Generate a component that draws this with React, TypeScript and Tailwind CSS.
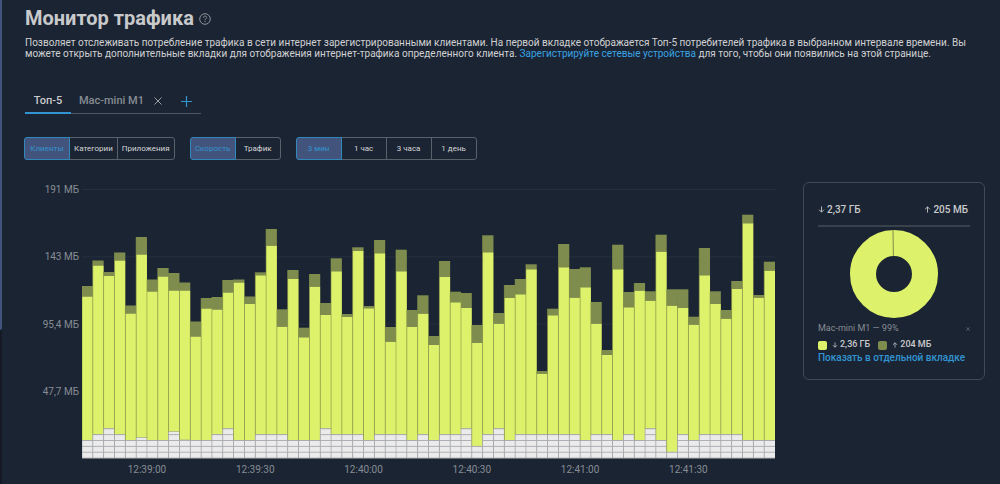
import React, { useState } from "react";

// Each sample: [top of total, top of download, number of overlay cells], in chart units.
type Sample = [number, number, number];

const CHART_TOP = 189;
const BASE = 458;
const BAR = 694 / 64;

const SAMPLES: Sample[] = [
  [286, 296.5, 3], [260.5, 265.5, 4], [272, 276, 5], [252.5, 260.5, 4],
  [305.5, 313.5, 3], [237, 254.5, 3.5], [279.5, 291.5, 3], [268, 276.5, 3],
  [273, 290.5, 4.5], [282.5, 290.5, 3.1], [321.5, 336.5, 3], [298, 308.5, 3],
  [297, 309.5, 4], [280, 292.5, 5], [279.5, 282.5, 3], [296.5, 304, 3],
  [272.3, 275.3, 4], [229, 245.7, 4], [309.3, 326.7, 4], [270, 279, 3],
  [327.7, 337.3, 3], [274, 286.7, 3], [303, 315, 5], [258.3, 271.3, 4],
  [314, 317, 4], [247.3, 251, 4], [306, 308.3, 3], [240, 253.3, 4],
  [327, 341.7, 4], [249.7, 271.3, 4], [310, 327, 3], [295.3, 313.7, 4],
  [336, 345, 3], [261, 277, 4], [291.7, 302.3, 4], [293, 308, 5],
  [325, 343, 2], [235.3, 252.3, 4], [313, 323.7, 5], [285, 298, 3],
  [279, 294.3, 4], [264.3, 269.3, 4], [371, 373.7, 4], [308.7, 315.3, 4],
  [244, 267.3, 4], [269, 297.7, 4], [267.3, 287.3, 3], [302, 323.7, 4],
  [350, 355, 4], [244.7, 269.3, 3], [292, 307.3, 4], [283, 290.7, 3],
  [291.3, 300.7, 5], [234.7, 251.7, 3], [289.3, 305.7, 1], [289.3, 308, 4],
  [316.7, 324.7, 3], [248, 275.3, 4], [291.3, 304, 4], [310, 318.7, 4],
  [281, 289, 4], [214.7, 223.3, 3], [295, 297.7, 3], [261.7, 270.7, 3],
];

const Y_LABELS = ["191 МБ", "143 МБ", "95,4 МБ", "47,7 МБ"];
const X_LABELS = ["12:39:00", "12:39:30", "12:40:00", "12:40:30", "12:41:00", "12:41:30"];

function Chart() {
  const cell = 5.85;
  return (
    <svg viewBox="0 189 694 270" preserveAspectRatio="none" className="block h-[270px] w-full" role="img" aria-label="Трафик">
      {[0, 1, 2, 3].map((i) => (
        <rect key={i} x="0" y={CHART_TOP + i * 67.3} width="694" height="1" fill="#262f3d" />
      ))}
      {SAMPLES.map(([total, down, cells], i) => {
        const x = i * BAR;
        const top = BASE - cells * cell;
        const whole = Math.floor(cells);
        return (
          <g key={i}>
            <rect x={x} y={total} width={BAR} height={down - total} fill="#7e8c4e" />
            <rect x={x} y={down} width={BAR} height={top - down} fill="#def16a" />
            <rect x={x} y={top} width={BAR} height={BASE - top} fill="#ebebeb" />
            {Array.from({ length: whole }, (_, n) => (
              <rect key={n} x={x} y={BASE - (n + 1) * cell - 0.4} width={BAR} height="0.9" fill="#a9aaaf" />
            ))}
            <rect x={x - 0.4} y={total} width="0.8" height={top - total} fill="#8b9a4b" fillOpacity="0.75" />
            <rect x={x - 0.4} y={top} width="0.8" height={BASE - top} fill="#a3a4a9" fillOpacity="0.8" />
          </g>
        );
      })}
      <rect x="0" y="457.7" width="694" height="1" fill="#8f9298" />
    </svg>
  );
}

function Segmented({ items, label, wide }: { items: string[]; label: string; wide?: boolean }) {
  const [active, setActive] = useState(0);
  return (
    <div role="group" aria-label={label} className="flex h-[23px]">
      {items.map((item, i) => (
        <button
          key={item}
          type="button"
          aria-pressed={i === active}
          onClick={() => setActive(i)}
          className={
            "relative -ml-px border text-[8px] first:ml-0 first:rounded-l-[3px] last:rounded-r-[3px] " +
            (wide ? "w-[46px] " : "min-w-[46px] px-1 ") +
            (i === active ? "z-10 border-[#3188bd] bg-[#42547c] text-[#3295d2]" : "border-[#59616b] text-[#d5d6d7]")
          }
        >
          {item}
        </button>
      ))}
    </div>
  );
}

function Arrow({ up, className }: { up?: boolean; className: string }) {
  return (
    <svg viewBox="0 0 8 8" className={className} fill="none" stroke="currentColor" strokeWidth="1" aria-hidden="true">
      {up ? <path d="M4 7.5V1M1.2 3.8L4 1l2.8 2.8" /> : <path d="M4 .5V7M1.2 4.2L4 7l2.8-2.8" />}
    </svg>
  );
}

function Cross({ className }: { className: string }) {
  return (
    <svg viewBox="0 0 8 8" className={className} fill="none" stroke="currentColor" strokeWidth="1" aria-hidden="true">
      <path d="M.5.5l7 7M7.5.5l-7 7" />
    </svg>
  );
}

function Summary() {
  return (
    <aside className="h-[198px] w-[182px] shrink-0 rounded-md border border-[#414956] px-3.5 pt-[15px]">
      <div className="flex h-[29px] items-center justify-between border-b-2 border-[#39414d] pr-0.5 pb-1 text-[10px] font-medium text-[#c9cacb]">
        <span className="flex items-center gap-0.5"><Arrow className="size-[7px]" />2,37 ГБ</span>
        <span className="flex items-center gap-0.5"><Arrow up className="size-[7px]" />205 МБ</span>
      </div>
      <svg viewBox="0 0 88 88" className="mx-auto mt-[3px] block size-[88px]" role="img" aria-label="Mac-mini M1 — 99%">
        <circle cx="44" cy="44" r="31" fill="none" stroke="#def16a" strokeWidth="26" />
        <path d="M43.4 26L43 0" stroke="#7e8c4e" strokeWidth="1" />
      </svg>
      <div className="mt-[5px] flex h-3 items-center justify-between text-[9px] text-[#868d93]">
        <span>Mac-mini M1 — 99%</span>
        <button type="button" aria-label="Закрыть"><Cross className="size-1" /></button>
      </div>
      <div className="mt-1 flex h-3 items-center text-[9px] font-medium text-[#c9cacb]">
        <span className="mr-[5px] size-[9px] rounded-[2px] bg-[#def16a]" />
        <Arrow className="mr-0.5 size-[6px]" />2,36 ГБ
        <span className="mr-[5px] ml-2 size-[9px] rounded-[2px] bg-[#7e8c4e]" />
        <Arrow up className="mr-0.5 size-[6px]" />204 МБ
      </div>
      <a href="#client" className="block text-[10px] leading-[14px] font-medium whitespace-nowrap text-[#3295d2]">Показать в отдельной вкладке</a>
    </aside>
  );
}

export default function App() {
  return (
    <div className="flex min-h-screen bg-[#1b2433] font-['Roboto','Liberation_Sans',sans-serif]">
      <div className="w-0.5 shrink-0 bg-[#151926]">
        <div className="h-[330px] rounded-br-sm bg-[#42547c]" />
      </div>
      <main className="min-w-0 flex-1 pt-1.5 pr-[15px] pl-[23px]">
        <h1 className="flex h-6 items-center gap-[5px] text-[20px] font-bold text-[#c9cacb]">
          Монитор трафика
          <svg viewBox="0 0 12 12" className="mt-0.5 size-3" fill="none" stroke="#8d9399" strokeWidth="1" aria-hidden="true">
            <circle cx="6" cy="6" r="5.3" />
            <path d="M4.3 4.8C4.3 3.7 5 3.1 6 3.1s1.7.6 1.7 1.5C7.7 5.7 6 5.8 6 7.1M6 8v1.1" />
          </svg>
        </h1>
        <p className="mt-[7px] max-w-[944px] text-[10px] leading-[11px] text-[#d0d1d2]">
          Позволяет отслеживать потребление трафика в сети интернет зарегистрированными клиентами. На первой вкладке отображается Топ-5 потребителей трафика в выбранном интервале времени. Вы можете открыть дополнительные вкладки для отображения интернет-трафика определенного клиента.{" "}
          <a href="#devices" className="text-[#3aa2e2]">Зарегистрируйте сетевые устройства</a> для того, чтобы они появились на этой странице.
        </p>

        <div role="tablist" className="mt-7 flex h-[27px] w-44 border-b border-[#4d5560] text-[11px]">
          <button role="tab" aria-selected="true" type="button" className="-mb-px w-[46px] border-b-2 border-[#3295d2] pt-[3px] font-medium text-[#c9cacb]">Топ-5</button>
          <button role="tab" aria-selected="false" type="button" className="ml-2 pt-0.5 font-medium whitespace-nowrap text-[#868d93]">Mac-mini M1</button>
          <button type="button" aria-label="Закрыть вкладку" className="ml-2.5 pt-0.5 text-[#9a9fa4]"><Cross className="size-2" /></button>
          <button type="button" aria-label="Добавить вкладку" className="ml-[19px] pt-0.5 text-[#3295d2]">
            <svg viewBox="0 0 11 11" className="size-[11px]" stroke="currentColor" strokeWidth="1.2" aria-hidden="true"><path d="M5.5 0v11M0 5.5h11" /></svg>
          </button>
        </div>

        <div className="mt-[23px] -ml-px flex gap-[15px]">
          <Segmented label="Группировка" items={["Клиенты", "Категории", "Приложения"]} />
          <Segmented label="Показатель" items={["Скорость", "Трафик"]} wide />
          <Segmented label="Интервал" items={["3 мин", "1 час", "3 часа", "1 день"]} wide />
        </div>

        <div className="mt-[22px] flex items-start">
          <div className="mt-2 grid h-[269px] w-[57px] shrink-0 grid-rows-4 pr-[3px] text-right text-[10px] leading-4 text-[#868d93]">
            {Y_LABELS.map((l) => <span key={l} className="-mt-2">{l}</span>)}
          </div>
          <div className="mt-[7px] min-w-0 flex-1">
            <Chart />
            <div className="mt-[3px] grid grid-cols-[repeat(64,minmax(0,1fr))] text-center text-[10px] leading-4 text-[#868d93]">
              {X_LABELS.map((l) => <span key={l} className="col-span-10 first:col-start-2 first:col-end-12">{l}</span>)}
            </div>
          </div>
          <div className="ml-7 shrink-0"><Summary /></div>
        </div>
      </main>
    </div>
  );
}
